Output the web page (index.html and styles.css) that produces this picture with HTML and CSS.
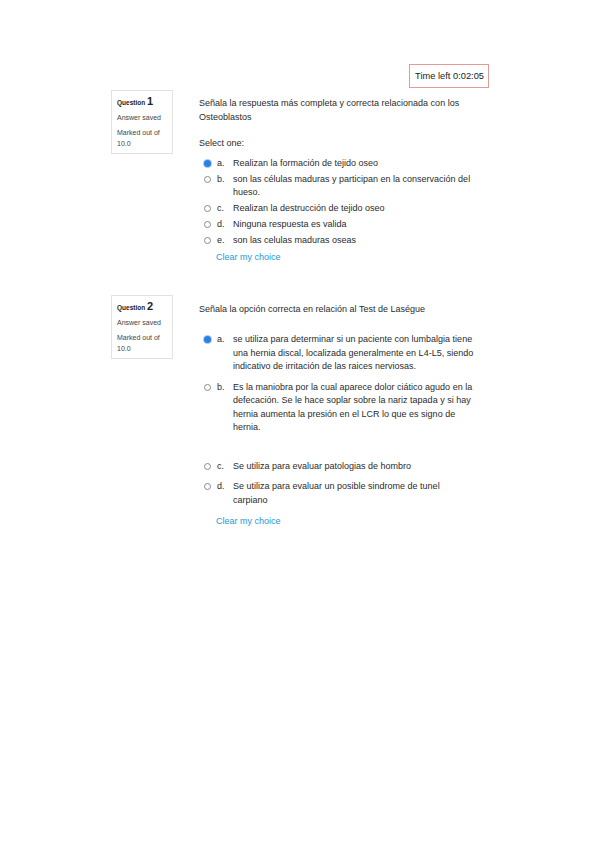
FILE: index.html
```html
<!DOCTYPE html>
<html>
<head>
<meta charset="utf-8">
<link rel="stylesheet" href="styles.css">
</head>
<body>
<div class="page">
  <div class="timer-row">
    <div class="timer">Time left 0:02:05</div>
  </div>

  <div class="question q1">
    <div class="info">
      <div class="qno">Question <span class="num">1</span></div>
      <div class="state">Answer saved</div>
      <div class="grade">Marked out of 10.0</div>
    </div>
    <div class="content">
      <div class="qtext">Señala la respuesta más completa y correcta relacionada con los Osteoblastos</div>
      <div class="prompt">Select one:</div>
      <div class="answers">
        <div class="opt"><span class="radio on"></span><span class="letter">a.</span><span class="txt">Realizan la formación de tejido oseo</span></div>
        <div class="opt"><span class="radio"></span><span class="letter">b.</span><span class="txt">son las células maduras y participan en la conservación del hueso.</span></div>
        <div class="opt"><span class="radio"></span><span class="letter">c.</span><span class="txt">Realizan la destrucción de tejido oseo</span></div>
        <div class="opt"><span class="radio"></span><span class="letter">d.</span><span class="txt">Ninguna respuesta es valida</span></div>
        <div class="opt"><span class="radio"></span><span class="letter">e.</span><span class="txt">son las celulas maduras oseas</span></div>
      </div>
      <div class="clear">Clear my choice</div>
    </div>
  </div>

  <div class="question q2">
    <div class="info">
      <div class="qno">Question <span class="num">2</span></div>
      <div class="state">Answer saved</div>
      <div class="grade">Marked out of 10.0</div>
    </div>
    <div class="content">
      <div class="qtext">Señala la opción correcta en relación al Test de Laségue</div>
      <div class="answers">
        <div class="opt"><span class="radio on"></span><span class="letter">a.</span><span class="txt">se utiliza para determinar si un paciente con lumbalgia tiene una hernia discal, localizada generalmente en L4-L5, siendo indicativo de irritación de las raices nerviosas.</span></div>
        <div class="opt gap-after"><span class="radio"></span><span class="letter">b.</span><span class="txt">Es la maniobra por la cual aparece dolor ciático agudo en la defecación. Se le hace soplar sobre la nariz tapada y si hay hernia aumenta la presión en el LCR lo que es signo de hernia.</span></div>
        <div class="opt"><span class="radio"></span><span class="letter">c.</span><span class="txt">Se utiliza para evaluar patologias de hombro</span></div>
        <div class="opt"><span class="radio"></span><span class="letter">d.</span><span class="txt narrow">Se utiliza para evaluar un posible sindrome de tunel carpiano</span></div>
      </div>
      <div class="clear">Clear my choice</div>
    </div>
  </div>
</div>
</body>
</html>
```

FILE: styles.css
```css
html, body {
  margin: 0;
  padding: 0;
  background: #fff;
}
body {
  font-family: "Liberation Sans", Arial, sans-serif;
  color: #2b2b2b;
}
.page {
  width: 599px;
  height: 848px;
  padding: 64px 110px 0 111px;
  box-sizing: border-box;
}
.timer-row {
  display: flex;
  justify-content: flex-end;
}
.timer {
  border: 1px solid #e59a97;
  height: 24px;
  box-sizing: border-box;
  padding: 0 4px 0 5px;
  font-size: 9.3px;
  line-height: 22px;
  color: #222;
}
.question {
  display: flex;
  align-items: flex-start;
}
.q1 { margin-top: 2px; }
.q2 { margin-top: 31px; }
.info {
  width: 62px;
  height: 64px;
  box-sizing: border-box;
  border: 1px solid #e2e2e2;
  padding: 3px 0 0 5px;
  margin-right: 26px;
  flex-shrink: 0;
  font-size: 7px;
  color: #444;
}
.qno {
  font-size: 6.5px;
  font-weight: bold;
  color: #222;
  line-height: 14px;
}
.qno .num {
  font-size: 11px;
}
.state {
  line-height: 12px;
  margin-top: 2px;
}
.grade {
  line-height: 11px;
  margin-top: 3px;
}
.content {
  flex: 1;
  font-size: 9px;
}
.qtext {
  line-height: 14px;
  padding-top: 6px;
  width: 270px;
}
.q2 .qtext {
  padding-top: 7px;
}
.prompt {
  line-height: 14px;
  margin-top: 12px;
}
.answers {
  margin-top: 7px;
  padding-left: 5px;
}
.opt {
  display: flex;
  align-items: flex-start;
  line-height: 13px;
  margin-bottom: 3px;
}
.radio {
  width: 7px;
  height: 7px;
  border-radius: 50%;
  border: 1px solid #8a8a8a;
  flex-shrink: 0;
  margin-top: 3px;
  margin-right: 6px;
  box-sizing: border-box;
}
.radio.on {
  border: none;
  background: #2f7fe0;
  box-shadow: 0 0 0 1px #a9cbf2;
}
.letter {
  width: 16px;
  flex-shrink: 0;
}
.txt {
  width: 240px;
}
.clear {
  color: #1e9ad6;
  line-height: 14px;
  padding-left: 17px;
  margin-top: 0px;
}
.q2 .answers {
  margin-top: 17px;
}
.q2 .txt {
  width: 248px;
}
.q2 .txt.narrow {
  width: 225px;
}
.q2 .opt {
  line-height: 13.5px;
  margin-bottom: 7px;
}
.q2 .opt.gap-after {
  margin-bottom: 25px;
}
.q2 .clear {
  margin-top: 4px;
}
```
